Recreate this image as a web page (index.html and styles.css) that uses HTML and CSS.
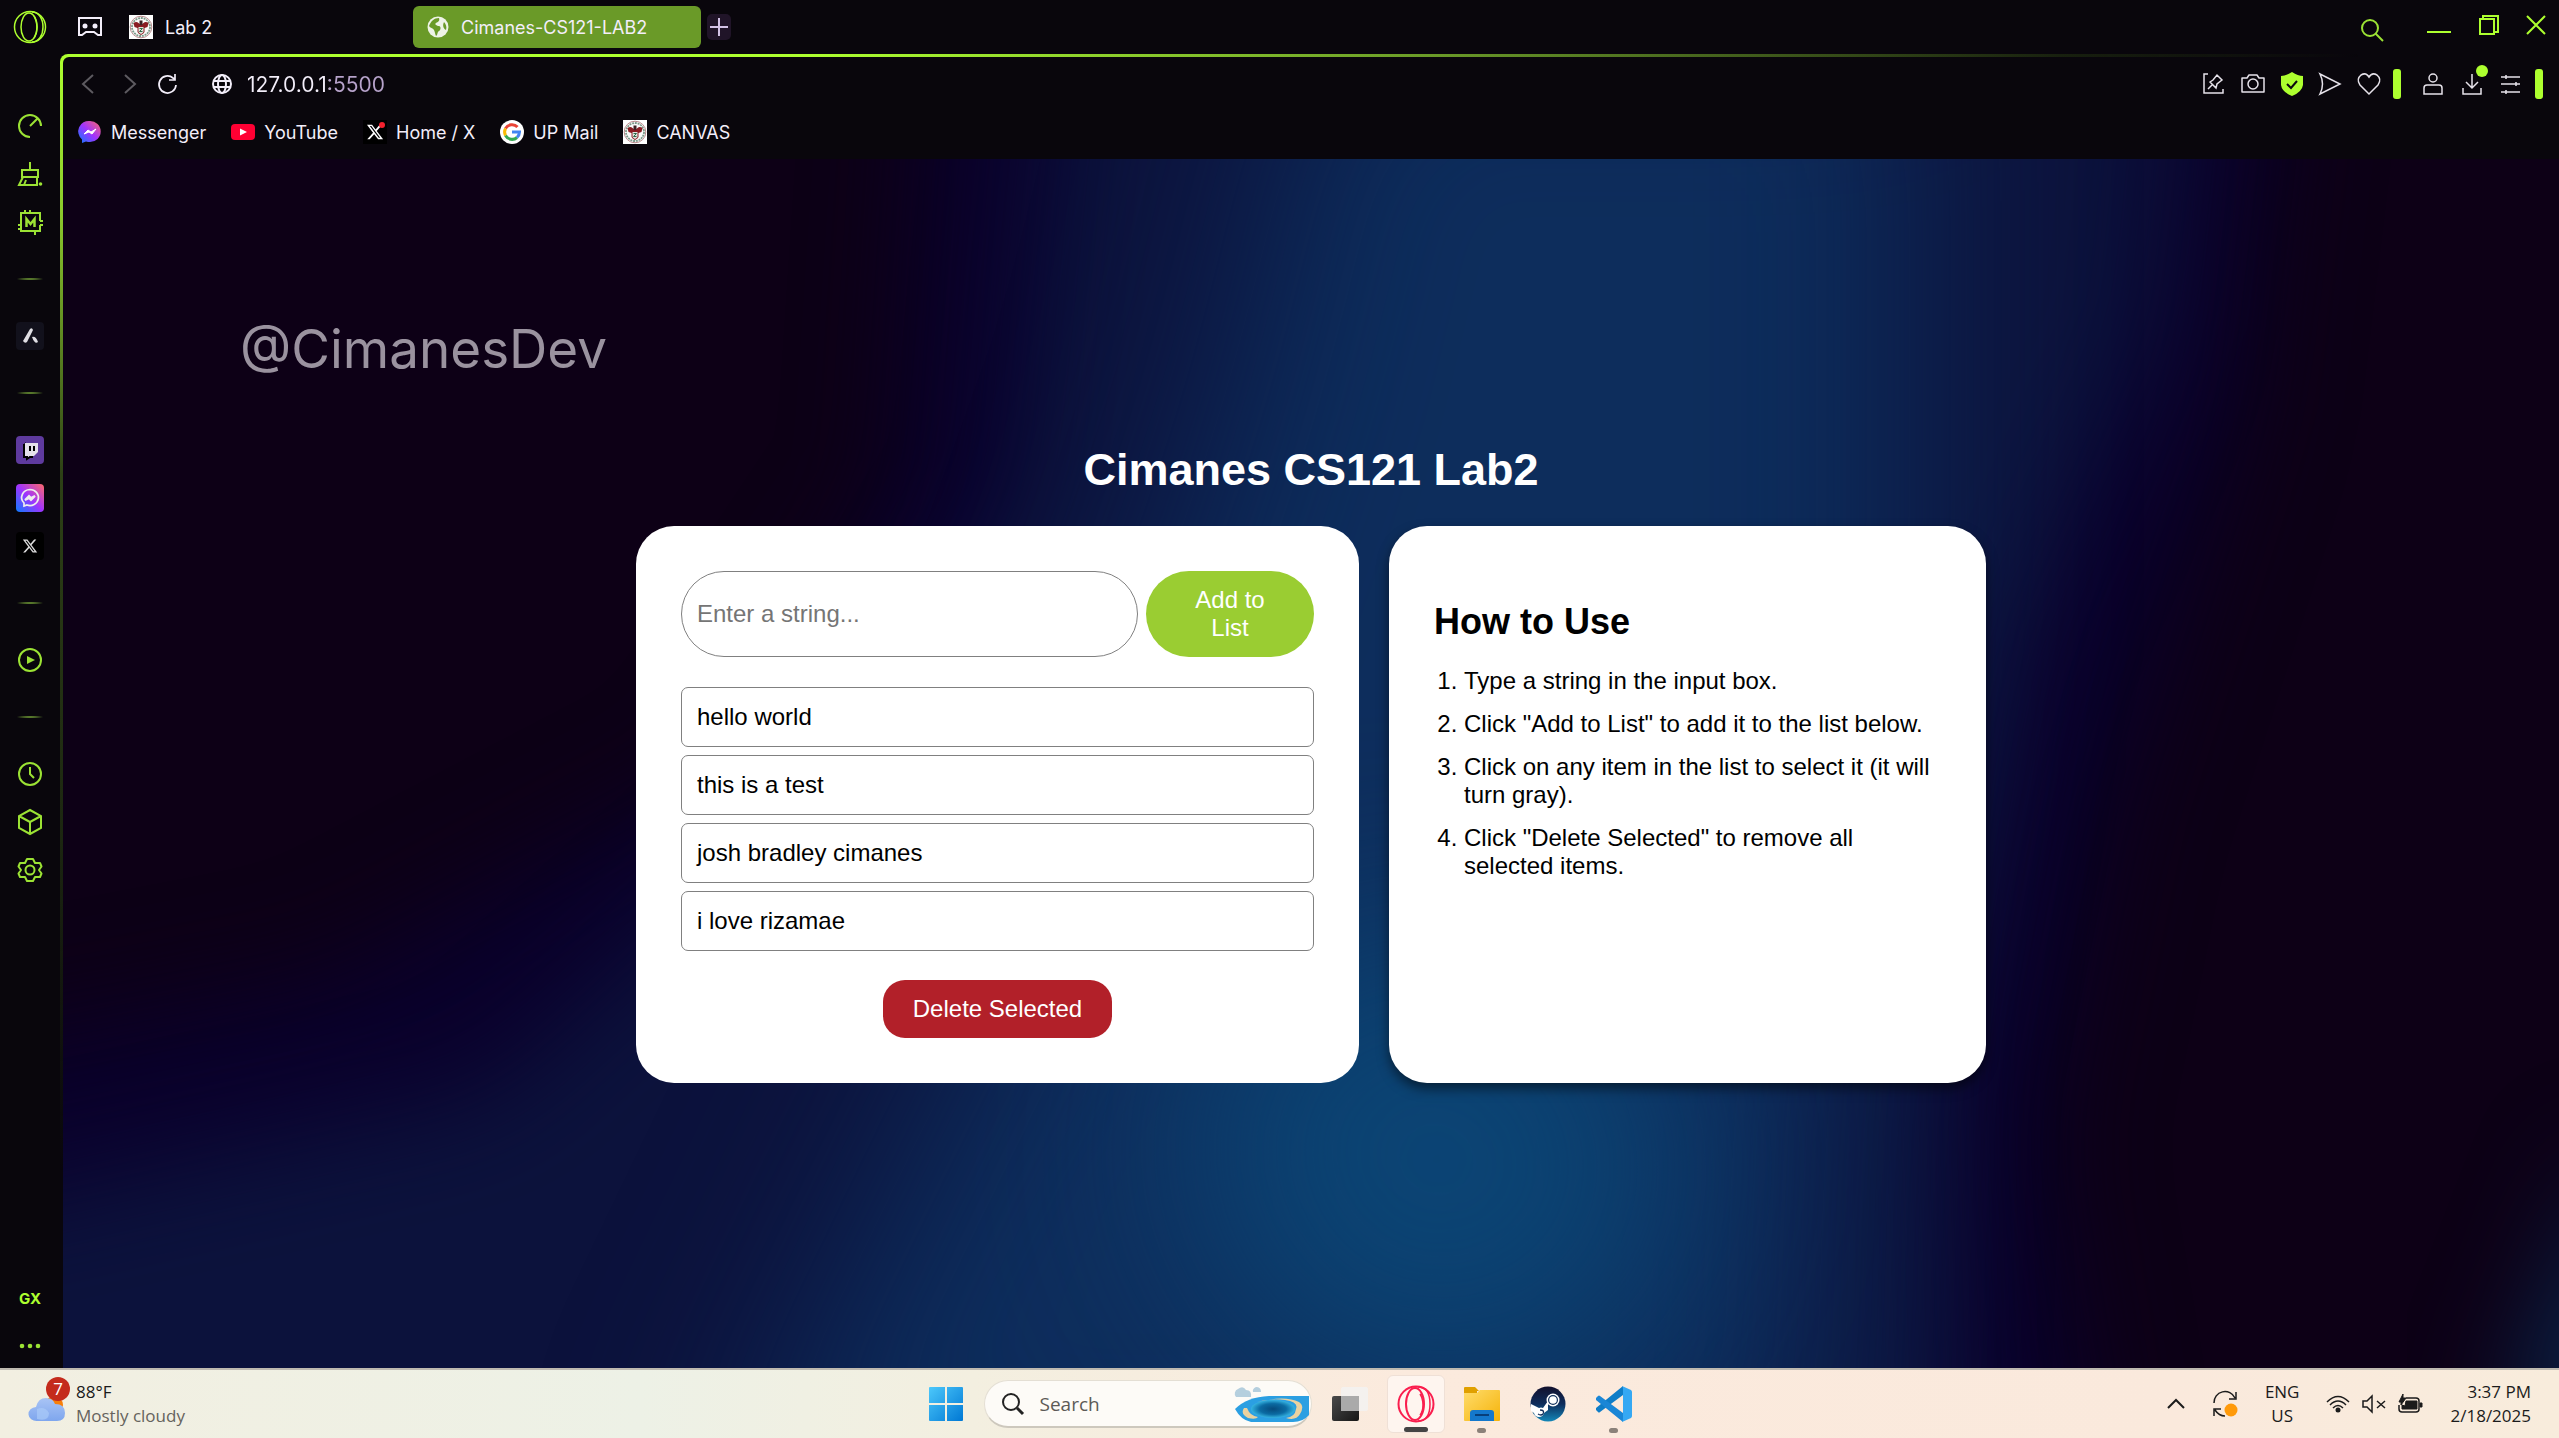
FILE: index.html
```html
<!DOCTYPE html>
<html lang="en">
<head>
<meta charset="utf-8">
<meta name="viewport" content="width=device-width, initial-scale=1">
<title>Cimanes-CS121-LAB2</title>
<link rel="stylesheet" href="styles.css">
</head>
<body>
<svg class="defs" aria-hidden="true">
  <defs>
    <linearGradient id="g-msg" x1="0" y1="1" x2="1" y2="0"><stop offset="0" stop-color="#0a7cff"/><stop offset=".5" stop-color="#a033ff"/><stop offset="1" stop-color="#ff6968"/></linearGradient>
    <linearGradient id="g-win" x1="0" y1="0" x2="1" y2="1"><stop offset="0" stop-color="#4cc8fb"/><stop offset="1" stop-color="#0078d4"/></linearGradient>
    <linearGradient id="g-cloud" x1="0" y1="0" x2="0" y2="1"><stop offset="0" stop-color="#a9c4f5"/><stop offset="1" stop-color="#7ea6ee"/></linearGradient>
    <linearGradient id="g-folder" x1="0" y1="0" x2="1" y2="1"><stop offset="0" stop-color="#ffdc6b"/><stop offset="1" stop-color="#f5b30a"/></linearGradient>
    <linearGradient id="g-steam" x1="0" y1="0" x2="0" y2="1"><stop offset="0" stop-color="#12102c"/><stop offset=".5" stop-color="#0e2d5c"/><stop offset="1" stop-color="#1387b8"/></linearGradient>
    <linearGradient id="g-view" x1="0" y1="0" x2="1" y2="1"><stop offset="0" stop-color="#4a4a4a"/><stop offset="1" stop-color="#161616"/></linearGradient>
    <radialGradient id="g-hole"><stop offset="0" stop-color="#064a7c"/><stop offset=".6" stop-color="#0b6ba3"/><stop offset="1" stop-color="#35b3e0"/></radialGradient>
    <symbol id="seal" viewBox="0 0 24 24"><path fill="#fff" d="M0 0h24v24H0z"/><circle cx="12" cy="12" r="10.800" fill="#fff" stroke="#b9898c" stroke-width="1"/><circle cx="12" cy="12" r="9" fill="#fbfbfa" stroke="#7d9a8a" stroke-width="1.800" stroke-dasharray="2 .8"/><path d="M4.500 8q3-2 5 0l2.500 2 2.500-2q2-2 5 0l-1 4-3 1v4q-1 2-3.500 3-2.500-1-3.500-3v-4l-3-1z" fill="#8a1c22"/><path d="M9.500 12h5v5q-1 1.500-2.500 2-1.500-.5-2.500-2z" fill="#dfe6de"/><path d="M10.500 13.500h3l-3 3h3" fill="none" stroke="#2f6b4a"/><path d="M10.500 5.500h3v4l-1.500 1-1.500-1z" fill="#3c2225"/></symbol>
    <symbol id="x-logo" viewBox="0 0 24 24"><path fill="currentColor" fill-rule="evenodd" d="M18.200 2.300h3.300l-7.200 8.200 8.500 11.300h-6.700l-5.200-6.900-6 6.900H1.700l7.700-8.800L1.300 2.300h6.800l4.700 6.200zM17 19.800h1.900L7.100 4.100h-2z"/></symbol>
  </defs>
</svg>

<div class="browser">
  <header class="tabbar">
    <button class="logo-btn" aria-label="Opera menu"><svg width="34" height="34" viewBox="0 0 34 34" fill="none" stroke="#adff2f" stroke-width="1.500"><circle cx="17" cy="17" r="15.500"/><ellipse cx="16" cy="17" rx="8" ry="14"/><path d="M19 2c7 0 11 7 11 15s-4 15-11 15M21 6c4 6 4 16 0 22"/></svg></button>
    <button class="icon-btn games" aria-label="GX corner"><svg width="26" height="22" viewBox="0 0 26 22" fill="none" stroke="#f3eefa" stroke-width="2"><path d="M2 2h22v17h-3l-4-3H9l-4 3H2z"/><circle cx="8" cy="10" r="2.500" fill="#f3eefa" stroke="none"/><circle cx="18" cy="10" r="2.500" fill="#f3eefa" stroke="none"/></svg></button>
    <button class="tab"><svg width="24" height="24"><use href="#seal"/></svg><span>Lab 2</span></button>
    <button class="tab tab-active"><svg width="22" height="22" viewBox="0 0 22 22"><circle cx="11" cy="11" r="10.500" fill="#eef3e6"/><path d="M12 2c1 3-1 4-3 5s1 3 3 3 2 4 0 5-1 4-3 5c-1-2-1-4-2-6s-4-2-5-4c2-5 5-8 10-8zM17 6c2 2 3 5 2 8-2-1-4-4-2-8z" fill="#6a9a28"/></svg><span>Cimanes-CS121-LAB2</span></button>
    <button class="new-tab" aria-label="New tab"><svg width="20" height="20" viewBox="0 0 20 20" stroke="#d3c2e6" stroke-width="2"><path d="M10 1v18M1 10h18"/></svg></button>
    <div class="win-controls">
      <button class="icon-btn search-tabs" aria-label="Search tabs"><svg width="24" height="24" viewBox="0 0 24 24" fill="none" stroke="#9be234" stroke-width="2"><circle cx="10" cy="10" r="8"/><path d="M15.500 15.500L23 23"/></svg></button>
      <button class="icon-btn" aria-label="Minimize"><svg width="26" height="24" viewBox="0 0 26 24" stroke="#adff2f" stroke-width="2"><path d="M1 19h24"/></svg></button>
      <button class="icon-btn" aria-label="Restore"><svg width="22" height="22" viewBox="0 0 22 22" fill="none" stroke="#adff2f" stroke-width="2"><path d="M2 5h14v15H2zM5 4V2h15v16h-3"/></svg></button>
      <button class="icon-btn" aria-label="Close"><svg width="20" height="20" viewBox="0 0 20 20" stroke="#adff2f" stroke-width="2"><path d="M1 1l18 18M19 1L1 19"/></svg></button>
    </div>
  </header>

  <nav class="sidebar" aria-label="Sidebar">
    <button class="side" aria-label="Player limiter"><svg viewBox="0 0 24 24"><path d="M12 23A11 11 0 1 1 23 12M12 12l7-7"/></svg></button>
    <button class="side" aria-label="Cleaner"><svg viewBox="0 0 24 24"><path d="M12 0v7M4 8h16v7H4zM5 15L1 23h18V15M6 23l2-5"/><circle cx="22.500" cy="22" r="1.800" fill="#9be234" stroke="none"/></svg></button>
    <button class="side" aria-label="Mods"><svg viewBox="0 0 24 24"><path d="M22 11V3H3v18h19v-6M7 3V0M12 3V0M3 15H0M3 19H0M22 11h3M22 15h3M17 21v4"/><path d="M8.500 17V9l4 5 4-5v8" stroke-width="2.500"/></svg></button>
    <hr class="side-rule">
    <button class="side" aria-label="Aria"><svg class="tile" viewBox="0 0 28 28"><rect width="28" height="28" rx="4" fill="#12111c"/><path d="M14 7q2-2 3 1l-6 12q-2 2-4-1zM16 15q4-1 6 5-3 3-6-5z" fill="#e0dfe4"/></svg></button>
    <hr class="side-rule">
    <button class="side" aria-label="Twitch"><svg class="tile" viewBox="0 0 28 28"><rect width="28" height="28" rx="4" fill="#5e3a9e"/><path d="M7 9l3-3v13l3 2H10l-1 1H7z" fill="#000"/><path d="M9 7h13v9l-4 4h-4l-2 2v-2H9z" fill="#e4e0ea"/><path d="M14 10v5M18 10v5M8 8v13h3v2l3-2h3" stroke="#000" stroke-width="2" fill="none"/></svg></button>
    <button class="side" aria-label="Messenger"><svg class="tile" viewBox="0 0 28 28"><rect width="28" height="28" rx="4" fill="url(#g-msg)"/><path d="M14 5.500a8.500 8 0 1 1-3 15.500l-3 1v-3a8.500 8 0 0 1 6-13.500z" fill="none" stroke="#eee" stroke-width="1.700"/><path d="M9 16l4-4 2 2 4-2-4 4-2-2z" fill="#eee" stroke="#eee"/></svg></button>
    <button class="side" aria-label="X"><svg class="tile" viewBox="0 0 28 28"><rect width="28" height="28" rx="4" fill="#000"/><g color="#ddd"><use href="#x-logo" x="6" y="6" width="16" height="16"/></g></svg></button>
    <hr class="side-rule">
    <button class="side" aria-label="Player"><svg viewBox="0 0 24 24"><circle cx="12" cy="12" r="11"/><path d="M9 8l8 4-8 4z" fill="#9be234" stroke="none"/></svg></button>
    <hr class="side-rule">
    <button class="side" aria-label="History"><svg viewBox="0 0 24 24"><circle cx="12" cy="12" r="11"/><path d="M12 5v7l4 4"/></svg></button>
    <button class="side" aria-label="Extensions"><svg viewBox="0 0 24 24"><path d="M12 0l11 6v12l-11 6-11-6V6zM1 6l11 6 11-6M12 12v12"/></svg></button>
    <button class="side" aria-label="Settings"><svg viewBox="0 0 24 24"><circle cx="12" cy="12" r="4.500"/><path d="M9 1h6l2 4 5 0 1.500 3.500L21 12l2.500 3.500L22 19h-5l-2 4H9l-2-4H2L.5 15.500 3 12 .5 8.500 2 5h5z" stroke-linejoin="round"/></svg></button>
    <div class="side-end">
      <button class="side side-gx">GX</button>
      <button class="side" aria-label="Sidebar setup"><svg viewBox="0 0 24 24"><g fill="#9be234" stroke="none"><circle cx="4" cy="12" r="2.300"/><circle cx="12" cy="12" r="2.300"/><circle cx="20" cy="12" r="2.300"/></g></svg></button>
    </div>
  </nav>

  <div class="window">
    <div class="toolbar">
      <div class="nav-row">
        <button class="icon-btn" aria-label="Back"><svg width="14" height="20" viewBox="0 0 14 20" fill="none" stroke="#5d5a60" stroke-width="2"><path d="M12 1L2 10l10 9"/></svg></button>
        <button class="icon-btn" aria-label="Forward"><svg width="14" height="20" viewBox="0 0 14 20" fill="none" stroke="#5d5a60" stroke-width="2"><path d="M2 1l10 9-10 9"/></svg></button>
        <button class="icon-btn" aria-label="Reload"><svg width="20" height="20" viewBox="0 0 20 20" fill="none" stroke="#f3eefa" stroke-width="1.700"><path d="M18 11a8.500 8.500 0 1 1-3-7l2 1M17 0v6h-6"/></svg></button>
        <label class="address"><svg width="20" height="20" viewBox="0 0 20 20" fill="none" stroke="#f3eefa" stroke-width="2"><circle cx="10" cy="10" r="9"/><ellipse cx="10" cy="10" rx="4" ry="9"/><path d="M2 7h16M2 13h16"/></svg><input type="text" value="127.0.0.1:5500" aria-label="Address"></label>
        <div class="tools">
          <button class="icon-btn" aria-label="Pin"><svg width="22" height="22" viewBox="0 0 22 22"><path d="M5 1H1v19h19v-4M5 16l4-4M7 9l6 6 1-4 5-4-5-5-4 5z"/></svg></button>
          <button class="icon-btn" aria-label="Snapshot"><svg width="24" height="22" viewBox="0 0 24 22"><path d="M1 5h5l2-3h8l2 3h5v14H1z" stroke-linejoin="round"/><circle cx="12" cy="11" r="5"/></svg></button>
          <button class="icon-btn" aria-label="Ad blocker"><svg width="22" height="24" viewBox="0 0 22 24"><path d="M11 0q6 4 11 4v9q-1 7-11 11Q1 20 0 13V4q5 0 11-4z" fill="#adff2f" stroke="none"/><path d="M6 12l4 4 6-7" stroke="#0b080f" stroke-width="2"/></svg></button>
          <button class="icon-btn" aria-label="My Flow"><svg width="22" height="22" viewBox="0 0 22 22"><path d="M1 1l20 10L1 21q5-10 0-20z"/></svg></button>
          <button class="icon-btn" aria-label="Bookmark"><svg width="24" height="22" viewBox="0 0 24 22"><path d="M12 21L3 12Q-1 6 4 2q5-3 8 2 3-5 8-2 5 4 1 10z"/></svg></button>
          <span class="bar"></span>
          <button class="icon-btn user" aria-label="Profile"><svg width="20" height="22" viewBox="0 0 20 22"><circle cx="10" cy="5" r="4"/><path d="M1 21v-6q0-3 3-3h12q3 0 3 3v6z"/></svg></button>
          <button class="icon-btn download" aria-label="Downloads"><svg width="20" height="22" viewBox="0 0 20 22"><path d="M10 1v14M4 9l6 6 6-6M1 15v6h18v-6"/></svg></button>
          <button class="icon-btn" aria-label="Easy setup"><svg width="20" height="22" viewBox="0 0 20 22"><path d="M0 4h19M0 11h19M0 19h19M5 2v4M15 9v4M5 17v4"/></svg></button>
          <span class="bar bar-end"></span>
        </div>
      </div>
      <nav class="bookmarks" aria-label="Bookmarks">
        <a href="#messenger"><svg width="24" height="24" viewBox="0 0 24 24"><path d="M12 1a10.700 10.500 0 0 1 0 21q-2 0-4-.500L4 23v-3.500A10.500 10.500 0 0 1 12 1z" fill="url(#g-msg)"/><path d="M6 14l4-4 3 2 5-3-4 5-3-2z" fill="#fff" stroke="#fff"/></svg>Messenger</a>
        <a href="#youtube"><svg width="24" height="24" viewBox="0 0 24 24"><rect y="4" width="24" height="16" rx="4" fill="#ff0033"/><path d="M9 8.500l7 3.500-7 3.500z" fill="#fff"/></svg>YouTube</a>
        <a href="#x"><svg width="24" height="24" viewBox="0 0 24 24"><path d="M0 0h24v24H0z"/><g color="#fff"><use href="#x-logo" x="3" y="3" width="18" height="18"/></g><circle cx="19" cy="5" r="3" fill="#f4212e"/></svg>Home / X</a>
        <a href="#mail"><svg width="24" height="24" viewBox="0 0 24 24"><circle cx="12" cy="12" r="12" fill="#fff"/><g fill="none" stroke-width="3"><path d="M17.500 7A7.500 7.500 0 0 0 5.500 8.500" stroke="#ea4335"/><path d="M5.500 8.500a7.500 7.500 0 0 0 0 7" stroke="#fbbc05"/><path d="M5.500 15.500A7.500 7.500 0 0 0 17 17.500" stroke="#34a853"/><path d="M17 17.500a7.500 7.500 0 0 0 2.500-5.500H12" stroke="#4285f4"/></g></svg>UP Mail</a>
        <a href="#canvas"><svg width="24" height="24"><use href="#seal"/></svg>CANVAS</a>
      </nav>
    </div>

    <main class="page">
      <svg class="backdrop" viewBox="38 97 1530 741" preserveAspectRatio="none" aria-hidden="true">
        <defs>
          <filter id="soft" x="-50%" y="-50%" width="200%" height="200%" color-interpolation-filters="sRGB"><feGaussianBlur stdDeviation="32"/></filter>
          <filter id="softer" x="-50%" y="-50%" width="200%" height="200%" color-interpolation-filters="sRGB"><feGaussianBlur stdDeviation="60"/></filter>
        </defs>
        <path fill="#0d0016" d="M38 97h1530v741H38z"/>
        <path filter="url(#soft)" fill="#0a002c" d="M570 0L550 300 430 480 200 600-60 650V940H1290L1250 700 1290 500 1370 250 1400 0z"/>
        <path filter="url(#soft)" fill="#0c123c" d="M650 0L620 300 510 480 300 670-60 750V940H1200L1190 650 1230 400 1320 200 1340 0z"/>
        <path filter="url(#softer)" fill="#0d2d5c" d="M810 0L750 250 660 500 560 700 440 950H1110L1120 650 1170 400 1170 0z"/>
        <ellipse filter="url(#softer)" cx="880" cy="710" rx="150" ry="140" fill="#0b4474" transform="rotate(20 880 710)"/>
        <path filter="url(#soft)" fill="#0b2348" d="M1600 700L1530 880H1640z"/>
      </svg>
      <p class="watermark">@CimanesDev</p>
      <h1 class="title">Cimanes CS121 Lab2</h1>
      <div class="cards">
        <section class="card card-list">
          <form class="entry">
            <input class="entry-input" type="text" placeholder="Enter a string..." aria-label="String">
            <button class="btn btn-add" type="button">Add to List</button>
          </form>
          <ul class="items">
            <li>hello world</li>
            <li>this is a test</li>
            <li>josh bradley cimanes</li>
            <li>i love rizamae</li>
          </ul>
          <button class="btn btn-delete" type="button">Delete Selected</button>
        </section>
        <section class="card card-help">
          <h2>How to Use</h2>
          <ol>
            <li>Type a string in the input box.</li>
            <li>Click "Add to List" to add it to the list below.</li>
            <li>Click on any item in the list to select it (it will turn gray).</li>
            <li>Click "Delete Selected" to remove all selected items.</li>
          </ol>
        </section>
      </div>
    </main>
  </div>
</div>

<footer class="taskbar">
  <button class="weather">
    <span class="weather-icon"><svg width="36" height="24" viewBox="0 0 36 24"><circle cx="25" cy="8" r="9" fill="#f77f0a"/><path d="M8 24a8 7 0 0 1-1-14Q9 1 17 1q7 0 9 6 10 0 10 9 0 8-8 8z" fill="url(#g-cloud)"/><path d="M8 22q12 3 12-6Q16 9 8 12" fill="#a9caf8" opacity=".7"/></svg><span class="badge">7</span></span>
    <span class="weather-text"><span>88°F</span><span class="muted">Mostly cloudy</span></span>
  </button>
  <div class="apps">
    <button class="app" aria-label="Start"><svg width="36" height="36" viewBox="0 0 36 36" fill="url(#g-win)"><path d="M1 2q0-1 1-1h15v16H1zM19 1h15q1 0 1 1v15H19zM1 19h16v16H2q-1 0-1-1zM19 19h16v15q0 1-1 1H19z"/></svg></button>
    <label class="search"><svg width="24" height="24" viewBox="0 0 24 24" fill="none" stroke="#222" stroke-width="2"><circle cx="10" cy="10" r="8"/><path d="M16 16l6 6" stroke-width="3"/></svg><input type="text" placeholder="Search" aria-label="Search">
      <svg width="78" height="38" viewBox="0 0 78 38"><path d="M3 12a5 5 0 0 1 2-8q5-4 8 1 6 0 5 7zM20 7q-1-3 3-5 5 0 5 5z" fill="#b5cfde"/><path d="M2 24q12-12 34-13h40v19q-6 7-16 7H18Q8 35 2 24z" fill="#2b9fe2"/><path d="M11 23q-4 6 4 10 8 2 10-1-8-1-11-9zM24 17q14-4 28-2 14 2 11 9-1 8-10 9 10 3 14-4 5-8-1-12-14-7-42 0z" fill="#ead2a0"/><ellipse cx="40" cy="24" rx="22" ry="9" fill="url(#g-hole)"/></svg></label>
    <button class="app" aria-label="Task view"><svg width="36" height="36" viewBox="0 0 36 36"><rect y="10" width="27" height="25" rx="2" fill="url(#g-view)"/><rect x="9" y="1" width="27" height="24" rx="2" fill="#f3f3f3" opacity=".8"/><rect x="9" y="10" width="18" height="15" fill="#aaa"/></svg></button>
    <button class="app app-current" aria-label="Opera GX"><svg width="38" height="38" viewBox="0 0 38 38" fill="none" stroke="#fa1e4e" stroke-width="2"><circle cx="19" cy="19" r="17.500"/><ellipse cx="18" cy="19" rx="9" ry="16"/><path d="M21 2c9 0 12 8 12 17s-3 17-12 17M23 9c4 6 4 16 0 21" stroke-width="1.500"/></svg></button>
    <button class="app app-open" aria-label="File Explorer"><svg width="36" height="36" viewBox="0 0 36 36"><path d="M0 2q0-1 1-1h10l4 4h-2v7H0z" fill="#e0a000"/><path d="M0 7h13l3-3h19q1 0 1 1v29q0 1-1 1H1q-1 0-1-1z" fill="url(#g-folder)"/><path d="M6 35V27q0-3 3-3h18q3 0 3 3v8z" fill="#1478cc"/><path d="M11 29h14" stroke="#083f7a" stroke-width="2"/></svg></button>
    <button class="app" aria-label="Steam"><svg width="36" height="36" viewBox="0 0 36 36"><circle cx="18" cy="18" r="17.500" fill="url(#g-steam)"/><path d="M1 18l8 4q2-1 4 0l5-7v9l-4 3q-1 4-5 4t-5-4l-3-2z" fill="#fff"/><circle cx="23" cy="14" r="6.500" fill="#fff"/><circle cx="23" cy="14" r="5" fill="#12305c"/><circle cx="23" cy="14" r="3.800" fill="#fff"/><path d="M10 24q5 0 3 4-2 2-5 0" fill="none" stroke="#12305c" stroke-width="1.300"/></svg></button>
    <button class="app app-open" aria-label="Visual Studio Code"><svg width="36" height="36" viewBox="0 0 36 36"><path d="M27 0v9L4 26q-1 1-2 0l-2-2v-2z" fill="#0f7dc7"/><path d="M0 12l2-2q1-1 2 0l23 17v9L0 14z" fill="#1a86d6"/><path d="M26 0l9 4q1 1 1 2v24q0 1-1 2l-9 4q1-1 1-3V3q0-2-1-3z" fill="#35a8f3"/></svg></button>
  </div>
  <div class="tray">
    <button class="tray-btn" aria-label="Hidden icons"><svg width="18" height="12" viewBox="0 0 18 12"><path d="M1 10l8-8 8 8" stroke-width="2"/></svg></button>
    <button class="tray-btn sync" aria-label="Updates"><svg width="26" height="26" viewBox="0 0 26 26"><path d="M2 12A11 11 0 0 1 23 7M24 1v7h-7M9 18H2v7M3 19q4 6 10 6"/><circle cx="19" cy="19" r="6.500" fill="#ff9a0a" stroke="none"/></svg></button>
    <button class="tray-btn lang"><span>ENG</span><span>US</span></button>
    <button class="tray-btn status" aria-label="Quick settings">
      <svg width="24" height="18" viewBox="0 0 24 18"><path d="M1 7q11-11 22 0M4 10q8-8 16 0M7 13q5-5 10 0"/><circle cx="12" cy="15" r="2.500" fill="#1b1b1b" stroke="none"/></svg>
      <svg width="24" height="18" viewBox="0 0 24 18"><path d="M1 6h4l5-5v16l-5-5H1zM15 6l8 7M23 6l-8 7"/></svg>
      <svg width="25" height="20" viewBox="0 0 25 20"><path d="M8 4h10q3 0 3 3v8q0 3-3 3H4q-3 0-3-3v-4"/><path d="M8 7h11v8H4v-4l3 1zM22 9h2v4h-2zM5 0l-4 8h2v3l5-7H5z" fill="#1b1b1b" stroke-width="1"/></svg>
    </button>
    <button class="tray-btn clock"><span>3:37 PM</span><span>2/18/2025</span></button>
  </div>
</footer>
</body>
</html>
```
FILE: styles.css
```css
* { box-sizing: border-box; }

:root {
  --ink: #09060c;
  --lime: #adff2f;
  --lime-soft: #9be234;
}

body {
  margin: 0;
  min-height: 100vh;
  display: flex;
  flex-direction: column;
  background: var(--ink);
  font-family: Inter, "Liberation Sans", sans-serif;
}

button {
  margin: 0;
  padding: 0;
  border: 0;
  background: none;
  color: inherit;
  font: inherit;
}

svg { display: block; flex: none; overflow: visible; }
.defs { position: absolute; width: 0; height: 0; }

/* browser frame */
.browser {
  flex: 1;
  display: grid;
  grid-template-columns: 60px minmax(0, 1fr);
  grid-template-rows: 54px minmax(0, 1fr);
}

.tabbar {
  grid-column: 1 / -1;
  display: flex;
  align-items: center;
  color: #f3eefa;
  font-size: 18px;
}

.logo-btn { padding: 0 13px; }
.icon-btn { display: flex; align-items: center; justify-content: center; }
.games { padding: 0 10px 0 17px; }

.tab {
  width: 298px;
  height: 42px;
  margin-left: 2px;
  padding: 0 14px;
  display: flex;
  align-items: center;
  gap: 12px;
  border-radius: 6px;
}

.tab-active {
  width: 288px;
  margin-left: 0;
  background: #6a9a28;
}

.new-tab {
  width: 24px;
  height: 26px;
  margin-left: 6px;
  display: flex;
  align-items: center;
  justify-content: center;
  border-radius: 5px;
  background: #201428;
}

.win-controls {
  margin-left: auto;
  padding: 0 13px 4px 0;
  display: flex;
  align-items: center;
  gap: 26px;
}

.search-tabs { padding: 10px 16px 0 0; }

/* sidebar */
.sidebar {
  padding-top: 48px;
  display: flex;
  flex-direction: column;
  align-items: center;
}

.side {
  width: 48px;
  height: 48px;
  display: flex;
  align-items: center;
  justify-content: center;
}

.side svg {
  width: 24px;
  height: 24px;
  fill: none;
  stroke: var(--lime-soft);
  stroke-width: 2;
}

.side .tile { width: 28px; height: 28px; stroke: none; }

.side-rule {
  width: 30px;
  height: 2px;
  margin: 32px 0;
  border: 0;
  background: radial-gradient(closest-side, #a5e84a, transparent);
}

.side-end { margin: auto 0 -2px; }
.side-gx { color: var(--lime); font-size: 15px; font-weight: 700; }

/* browser window */
.window {
  display: flex;
  flex-direction: column;
  padding: 3px 0 0 3px;
  border-top-left-radius: 8px;
  background:
    linear-gradient(var(--lime), var(--lime)) 0 0 / 10px 10px no-repeat,
    linear-gradient(90deg, var(--lime) 30%, #6a9a28 55%, #18200f 80%, transparent 92%) 0 0 / 100% 3px no-repeat,
    linear-gradient(180deg, var(--lime), #8bc92c 12%, #2d4016 32%, #1c2611 60%, transparent 85%) 0 0 / 3px 100% no-repeat;
}

.toolbar {
  height: 102px;
  border-top-left-radius: 6px;
  background: var(--ink);
}

.nav-row {
  height: 54px;
  padding: 0 16px 0 18px;
  display: flex;
  align-items: center;
  gap: 28px;
}

.nav-row > .icon-btn:nth-child(3) { margin-left: -7px; }

.address {
  flex: 1;
  margin-left: 6px;
  display: flex;
  align-items: center;
  gap: 15px;
}

.address input {
  flex: 1;
  padding: 0;
  border: 0;
  outline: 0;
  font: 21px Inter, sans-serif;
  -webkit-text-fill-color: transparent;
  background: linear-gradient(90deg, #f3eefa 82px, #b7a3cb 82px);
  -webkit-background-clip: text;
  background-clip: text;
}

.tools {
  display: flex;
  align-items: center;
  gap: 16px;
}

.tools svg { fill: none; stroke: #e6e2ea; stroke-width: 1.500; }

.bar {
  width: 8px;
  height: 30px;
  margin-left: -4px;
  border-radius: 3px;
  background: var(--lime);
}

.bar-end { margin-left: -2px; }
.user { margin-left: 6px; }

.download { position: relative; margin: 0 3px; }
.download::after {
  content: "";
  position: absolute;
  right: -6px;
  top: -8px;
  width: 12px;
  height: 12px;
  border-radius: 50%;
  background: var(--lime);
}

.bookmarks {
  height: 42px;
  padding-left: 15px;
  display: flex;
  align-items: center;
  gap: 25px;
}

.bookmarks a {
  display: flex;
  align-items: center;
  gap: 9px;
  color: #f3eefa;
  font-size: 18px;
  text-decoration: none;
}

/* web page */
.page {
  flex: 1;
  position: relative;
  isolation: isolate;
  overflow: hidden;
  display: flex;
  flex-direction: column;
  align-items: center;
  padding: 0 24px 24px;
  font-family: "Liberation Sans", Arial, sans-serif;
  font-size: 24px;
  line-height: 28px;
}

.backdrop {
  position: absolute;
  inset: 0;
  z-index: -1;
  width: 100%;
  height: 100%;
  overflow: hidden;
}

.watermark {
  align-self: flex-start;
  margin: 158px 0 0 153px;
  color: #9a929f;
  font: 400 53px/64px Inter, sans-serif;
}

.title {
  margin: 61px 0 28px;
  color: #fff;
  font-size: 45px;
  line-height: 56px;
}

.cards {
  width: 100%;
  max-width: 1350px;
  display: grid;
  grid-template-columns: 723fr 597fr;
  gap: 30px;
}

.card {
  padding: 45px;
  border-radius: 38px;
  background: #fff;
  color: #000;
}

.card-list {
  display: flex;
  flex-direction: column;
  align-items: center;
}

.card-help { box-shadow: 0 6px 12px rgba(0, 0, 0, 0.5); }

.entry { width: 100%; display: flex; gap: 8px; }

.entry-input {
  flex: 1;
  min-width: 0;
  padding: 15px;
  border: 1px solid #808080;
  border-radius: 43px;
  background: #fff;
  font: inherit;
}

.entry-input::placeholder { color: #757575; }
.btn { color: #fff; }

.btn-add {
  width: 168px;
  padding: 15px 30px;
  border-radius: 43px;
  background: #9acd32;
}

.items {
  width: 100%;
  margin: 30px 0 29px;
  padding: 0;
  display: flex;
  flex-direction: column;
  gap: 8px;
  list-style: none;
}

.items li {
  padding: 15px;
  border: 1px solid #808080;
  border-radius: 7px;
}

.btn-delete {
  padding: 15px 30px;
  border-radius: 22px;
  background: #b22029;
}

.card-help h2 {
  margin: 30px 0 24px;
  font-size: 36px;
  line-height: 42px;
}

.card-help ol {
  margin: 0;
  padding-left: 30px;
  display: grid;
  gap: 15px;
}

/* taskbar */
.taskbar {
  height: 70px;
  display: grid;
  grid-template-columns: 1fr auto 1fr;
  align-items: center;
  border-top: 2px solid #bfbab0;
  background: linear-gradient(90deg, #f2efe1, #edf1e6 25%, #f3efe0 38%, #fbeadd 55%, #fae9dc 85%, #f8ecdc);
  color: #1b1b1b;
  font-family: "Open Sans", "Noto Sans", sans-serif;
  font-size: 17px;
  line-height: 24px;
}

.weather {
  justify-self: start;
  padding-left: 29px;
  display: flex;
  align-items: center;
  gap: 11px;
  text-align: left;
}

.weather-icon { position: relative; padding-top: 10px; }

.badge {
  position: absolute;
  right: -5px;
  top: -10px;
  width: 24px;
  height: 24px;
  border-radius: 50%;
  background: #c42b1c;
  color: #fff;
  text-align: center;
}

.weather-text { display: flex; flex-direction: column; }
.muted { color: #65635d; }

.apps { display: flex; align-items: center; }

.app {
  position: relative;
  width: 58px;
  height: 58px;
  margin: 0 4px;
  display: flex;
  align-items: center;
  justify-content: center;
  border-radius: 6px;
}

.app-current {
  border: 1px solid #efe0d6;
  background: #fef5ef;
}

.app-open::after,
.app-current::after {
  content: "";
  position: absolute;
  bottom: 0;
  width: 9px;
  height: 5px;
  border-radius: 3px;
  background: #8b8179;
}

.app-current::after { width: 24px; background: #444; }

.search {
  width: 328px;
  height: 48px;
  margin: 0 5px;
  padding: 0 0 0 16px;
  display: flex;
  align-items: center;
  gap: 15px;
  border: 1px solid #e4dfd4;
  border-bottom: 2px solid #cdc8bd;
  border-radius: 24px;
  background: #fdfbf7;
}

.search input {
  flex: 1;
  min-width: 0;
  padding: 0;
  border: 0;
  background: none;
  font: 19px "Open Sans", sans-serif;
}

.search input::placeholder { color: #5c5a56; }

.tray {
  justify-self: end;
  padding-right: 28px;
  display: flex;
  align-items: center;
  gap: 27px;
}

.tray svg { fill: none; stroke: #1b1b1b; stroke-width: 1.500; }
.status { display: flex; gap: 12px; align-items: center; }
.lang, .clock { display: flex; flex-direction: column; }
.lang { align-items: center; }
.clock { align-items: flex-end; }
```
